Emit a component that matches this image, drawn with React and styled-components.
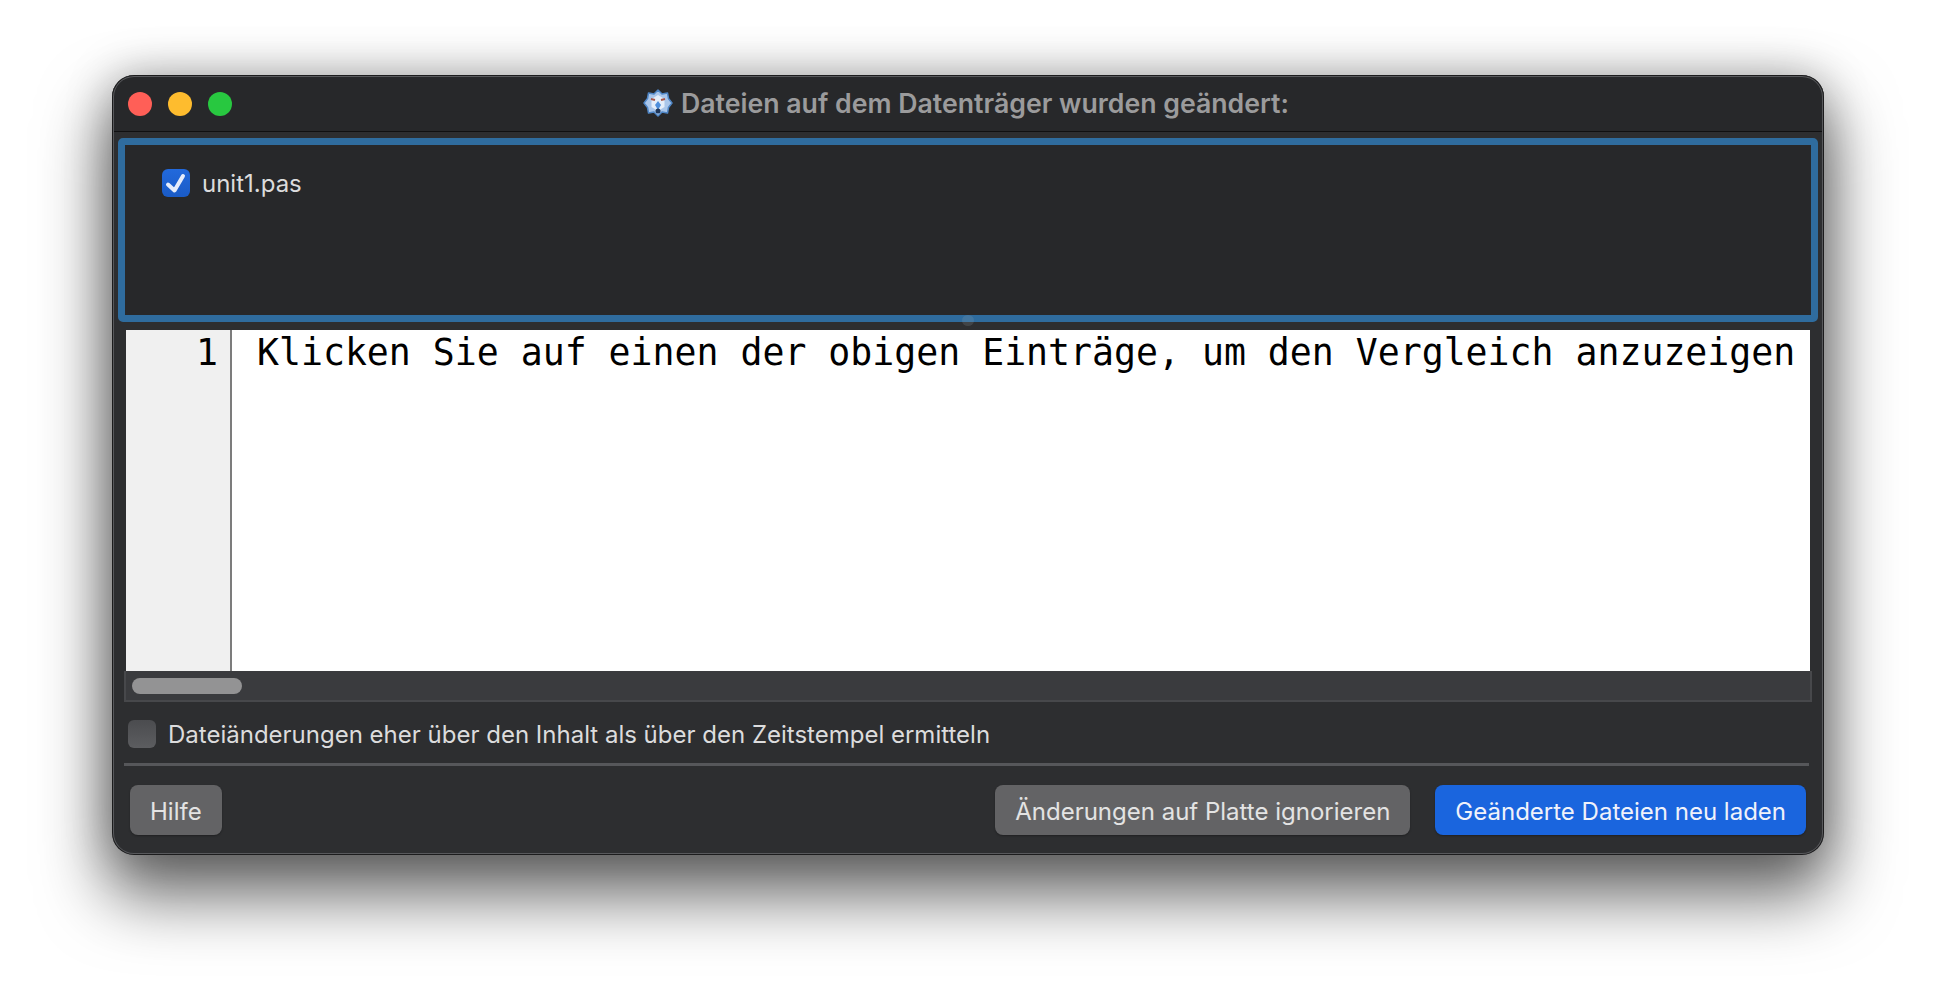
import React from 'react';
import styled, { createGlobalStyle } from 'styled-components';

const GlobalStyle = createGlobalStyle`
  html, body {
    margin: 0;
    height: 100%;
    background: #ffffff;
    overflow: hidden;
  }
`;

const Page = styled.div`
  width: 1936px;
  height: 1002px;
  padding: 75px 0 0 112px;
  box-sizing: border-box;
  font-family: Inter, "Liberation Sans", sans-serif;
`;

const Window = styled.div`
  position: relative;
  width: 1712px;
  height: 780px;
  box-sizing: border-box;
  display: flex;
  flex-direction: column;
  background: #2d2e30;
  border-radius: 22px;
  box-shadow: 0 36px 66px 6px rgba(0, 0, 0, 0.58), 0 0 46px rgba(0, 0, 0, 0.26);
  overflow: hidden;

  &::after {
    content: "";
    position: absolute;
    inset: 0;
    border-radius: inherit;
    box-shadow: inset 0 0 0 1px #1c1c1d, inset 0 0 0 2px #58595c;
    pointer-events: none;
  }
`;

const TitleBar = styled.div`
  position: relative;
  height: 57px;
  flex: none;
  display: flex;
  align-items: center;
  justify-content: center;
  gap: 8px;
  padding: 0 4px 0 0;
  background: #27282a;
  box-sizing: border-box;
  border-bottom: 1.5px solid #101011;
`;

const Lights = styled.div`
  position: absolute;
  left: 16px;
  top: 17px;
  display: flex;
  gap: 16px;
`;

const Light = styled.span`
  width: 24px;
  height: 24px;
  border-radius: 50%;
  background: ${(p) => p.$color};
`;

const Title = styled.h1`
  margin: 0;
  font-size: 26.7px;
  font-weight: 600;
  color: #9b9b9c;
  white-space: nowrap;
`;

const Body = styled.div`
  flex: 1;
  display: flex;
  flex-direction: column;
  padding: 6px 6px 0;
`;

const FileList = styled.div`
  position: relative;
  height: 184px;
  flex: none;
  box-sizing: border-box;
  padding: 22px 0 0 37px;
  background: #27282a;
  border: 7px solid #2f6c9e;
  border-radius: 5px;
  display: flex;
  align-items: flex-start;
`;

const SplitterGrip = styled.span`
  position: absolute;
  left: 50%;
  bottom: -11px;
  width: 12px;
  height: 11px;
  margin-left: -6px;
  border-radius: 50%;
  background: rgba(160, 170, 180, 0.18);
`;

const CheckRow = styled.label`
  display: flex;
  align-items: center;
  gap: 12px;
  font-size: 24px;
  color: #dcdcdd;
  white-space: nowrap;
`;

const CheckLabel = styled.span`
  padding-top: 2px;
`;

const CheckBox = styled.span`
  width: 28px;
  height: 28px;
  flex: none;
  display: flex;
  align-items: center;
  justify-content: center;
  border-radius: 6px;
  background: ${(p) => (p.$checked ? 'linear-gradient(#2269dc, #1a5bc6)' : 'linear-gradient(#4b4c4f, #5c5d60)')};
`;

const Editor = styled.div`
  margin: 8px 8px 0;
  height: 341px;
  flex: none;
  display: flex;
  background: #ffffff;
  color: #000000;
  font-family: "DejaVu Sans Mono", monospace;
  font-size: 36.5px;
  line-height: 46px;
`;

const Gutter = styled.div`
  width: 104px;
  flex: none;
  box-sizing: border-box;
  padding-right: 12px;
  text-align: right;
  background: #f0f0f0;
`;

const GutterLine = styled.div`
  width: 2px;
  flex: none;
  background: #7c7c7c;
`;

const EditorText = styled.div`
  padding-left: 25px;
  white-space: pre;
  overflow: hidden;
`;

const ScrollTrack = styled.div`
  margin: 0 6px;
  height: 31px;
  flex: none;
  box-sizing: border-box;
  padding: 7px 0 0 6px;
  background: #3a3b3e;
  border: solid #47484b;
  border-width: 0 2px 2px 2px;
`;

const ScrollThumb = styled.div`
  width: 110px;
  height: 16px;
  border-radius: 8px;
  background: #939394;
`;

const OptionRow = styled.div`
  height: 61px;
  flex: none;
  display: flex;
  align-items: center;
  box-sizing: border-box;
  padding: 2px 0 0 10px;
`;

const Separator = styled.div`
  margin: 0 9px 0 6px;
  height: 3px;
  flex: none;
  background: #56575a;
`;

const ButtonRow = styled.div`
  flex: 1;
  display: flex;
  align-items: flex-start;
  gap: 25px;
  padding: 19px 12px 0 12px;
`;

const Button = styled.button`
  height: 50px;
  box-sizing: border-box;
  padding: 2px 20px 0;
  border: 0;
  border-radius: 8px;
  font-family: inherit;
  font-size: 24px;
  color: ${(p) => (p.$primary ? '#f0f2fa' : '#e3e3e3')};
  background: ${(p) => (p.$primary ? '#1a65de' : '#636365')};
  box-shadow: 0 1px 2px rgba(0, 0, 0, 0.3);
  white-space: nowrap;
`;

const Spacer = styled.div`
  flex: 1;
`;

const AppIcon = () => (
  <svg width="30" height="30" viewBox="0 0 30 30">
    <path
      d="M15 2l4 4 5.500-1 1 5.500L29 15l-3.500 4.500-1 5.500-5.500-1-4 4-4-4-5.500 1-1-5.500L1 15l3.500-4.500 1-5.500 5.500 1z"
      fill="#a9c6ea"
      stroke="#4f86c6"
      strokeWidth="1.5"
      strokeLinejoin="round"
    />
    <path d="M15 7l6.500 4v8L15 23l-6.500-4v-8z" fill="#e4eefa" />
    <path d="M8 11l4 1M22 11l-4 1" stroke="#a5564a" strokeWidth="2" />
    <path d="M15 13l3 4-3 5-3-5z" fill="#4e8fdc" />
    <circle cx="15" cy="23" r="2.500" fill="#1f3658" />
  </svg>
);

const Tick = () => (
  <svg width="28" height="28" viewBox="0 0 28 28" fill="none">
    <path d="M6 15.500l6.500 6L21 7" stroke="#e6edfb" strokeWidth="4" strokeLinecap="round" strokeLinejoin="round" />
  </svg>
);

export default function App() {
  return (
    <Page>
      <GlobalStyle />
      <Window>
        <TitleBar>
          <Lights>
            <Light $color="#ff5f57" />
            <Light $color="#febc2e" />
            <Light $color="#28c840" />
          </Lights>
          <AppIcon />
          <Title>Dateien auf dem Datenträger wurden geändert:</Title>
        </TitleBar>
        <Body>
          <FileList>
            <CheckRow>
              <CheckBox $checked><Tick /></CheckBox>
              <CheckLabel>unit1.pas</CheckLabel>
            </CheckRow>
            <SplitterGrip />
          </FileList>
          <Editor>
            <Gutter>1</Gutter>
            <GutterLine />
            <EditorText>Klicken Sie auf einen der obigen Einträge, um den Vergleich anzuzeigen</EditorText>
          </Editor>
          <ScrollTrack>
            <ScrollThumb />
          </ScrollTrack>
          <OptionRow>
            <CheckRow>
              <CheckBox />
              <CheckLabel>Dateiänderungen eher über den Inhalt als über den Zeitstempel ermitteln</CheckLabel>
            </CheckRow>
          </OptionRow>
          <Separator />
          <ButtonRow>
            <Button>Hilfe</Button>
            <Spacer />
            <Button>Änderungen auf Platte ignorieren</Button>
            <Button $primary>Geänderte Dateien neu laden</Button>
          </ButtonRow>
        </Body>
      </Window>
    </Page>
  );
}
